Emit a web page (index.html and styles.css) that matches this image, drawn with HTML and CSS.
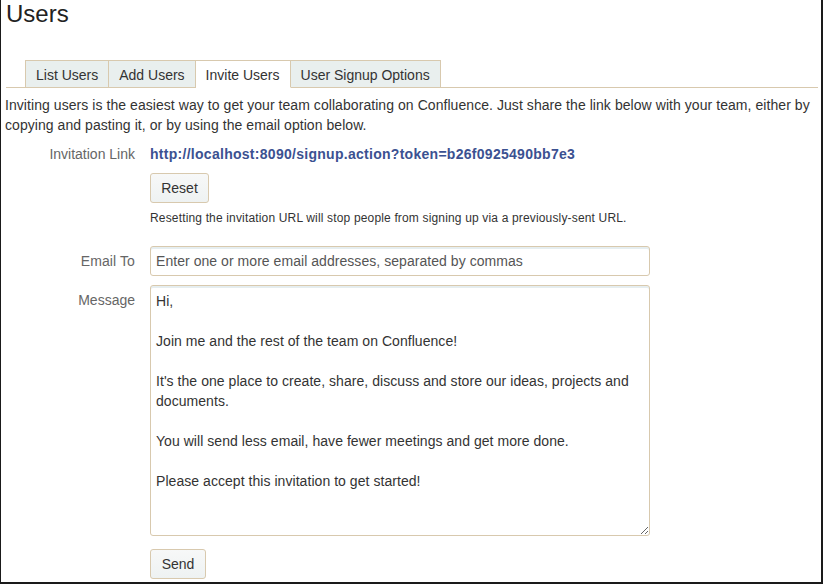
FILE: index.html
```html
<!DOCTYPE html>
<html>
<head>
<meta charset="utf-8">
<link rel="stylesheet" href="styles.css">
</head>
<body>
<div class="frame">
  <h1 class="title">Users</h1>
  <div class="tabs">
    <span class="tab">List Users</span>
    <span class="tab">Add Users</span>
    <span class="tab active">Invite Users</span>
    <span class="tab">User Signup Options</span>
  </div>
  <p class="intro">Inviting users is the easiest way to get your team collaborating on Confluence. Just share the link below with your team, either by copying and pasting it, or by using the email option below.</p>
  <div class="form">
    <div class="label link-label">Invitation Link</div>
    <div class="field">
      <div class="link">http://localhost:8090/signup.action?token=b26f0925490bb7e3</div>
      <button class="btn reset">Reset</button>
      <div class="note">Resetting the invitation URL will stop people from signing up via a previously-sent URL.</div>
    </div>
    <div class="label email-label">Email To</div>
    <div class="field">
      <input class="input" type="text" placeholder="Enter one or more email addresses, separated by commas">
    </div>
    <div class="label msg-label">Message</div>
    <div class="field">
      <textarea class="textarea">Hi,

Join me and the rest of the team on Confluence!

It's the one place to create, share, discuss and store our ideas, projects and documents.

You will send less email, have fewer meetings and get more done.

Please accept this invitation to get started!</textarea>
      <button class="btn send">Send</button>
    </div>
  </div>
</div>
</body>
</html>
```
FILE: styles.css
```css
html, body {
  margin: 0;
  padding: 0;
  background: #fff;
}
body {
  font-family: Arial, "Liberation Sans", sans-serif;
  font-size: 14px;
  color: #333;
}
.frame {
  box-sizing: border-box;
  width: 823px;
  height: 584px;
  border-left: 1px solid #1a1a1a;
  border-right: 2px solid #1a1a1a;
  border-bottom: 2px solid #1a1a1a;
  overflow: hidden;
}
.title {
  margin: 0;
  padding-left: 5px;
  font-size: 24px;
  line-height: 28px;
  font-weight: normal;
  color: #222;
}
.tabs {
  display: flex;
  margin: 32px 3px 0 5px;
  padding-left: 19px;
  border-bottom: 1px solid #d8c9ae;
}
.tab {
  box-sizing: border-box;
  height: 28px;
  line-height: 28px;
  padding: 0 10px;
  border-top: 1px solid #d8c9ae;
  border-right: 1px solid #d8c9ae;
  border-bottom: 1px solid #d8c9ae;
  background: #e9efee;
  color: #333;
  font-size: 14px;
  margin-bottom: -1px;
}
.tab:first-child {
  border-left: 1px solid #d8c9ae;
}
.tab.active {
  background: #fff;
  border-bottom-color: #fff;
}
.intro {
  margin: 7px 0 0 4px;
  line-height: 20px;
  padding-right: 8px;
  letter-spacing: 0.06px;
}
.form {
  display: grid;
  grid-template-columns: 135px 500px;
  column-gap: 14px;
  margin-top: 9px;
}
.label {
  text-align: right;
  color: #666;
  line-height: 20px;
  padding-right: 1px;
}
.link {
  font-weight: bold;
  color: #3b5191;
  line-height: 20px;
  letter-spacing: 0.28px;
}
.btn {
  display: block;
  box-sizing: border-box;
  height: 30px;
  padding: 0 10px;
  border: 1px solid #d8c9ae;
  border-radius: 3px;
  background: linear-gradient(#f7f8f8, #eef2f2);
  font-family: Arial, "Liberation Sans", sans-serif;
  font-size: 14px;
  color: #333;
}
.reset {
  margin-top: 9px;
  width: 59px;
}
.note {
  font-size: 12px;
  line-height: 16px;
  margin-top: 7px;
  margin-bottom: 20px;
  letter-spacing: 0.16px;
}
.email-label {
  line-height: 30px;
  letter-spacing: 0.1px;
}
.input {
  display: block;
  box-sizing: border-box;
  width: 500px;
  height: 30px;
  margin: 0;
  padding: 0 5px;
  border: 1px solid #d8c9ae;
  border-radius: 3px;
  box-shadow: inset 0 2px 0 #e6eef0;
  font-family: Arial, "Liberation Sans", sans-serif;
  font-size: 14px;
  color: #333;
  outline: none;
  letter-spacing: 0.05px;
}
.input::placeholder {
  color: #555;
  opacity: 1;
}
.msg-label {
  margin-top: 9px;
  line-height: 30px;
}
.textarea {
  display: block;
  box-sizing: border-box;
  width: 500px;
  height: 251px;
  margin: 9px 0 0 0;
  padding: 5px 5px;
  border: 1px solid #d8c9ae;
  border-radius: 3px;
  box-shadow: inset 0 2px 0 #e6eef0;
  font-family: Arial, "Liberation Sans", sans-serif;
  font-size: 14px;
  line-height: 20px;
  color: #333;
  resize: both;
  outline: none;
  letter-spacing: 0.05px;
}
.send {
  margin-top: 13px;
  width: 56px;
}
```
